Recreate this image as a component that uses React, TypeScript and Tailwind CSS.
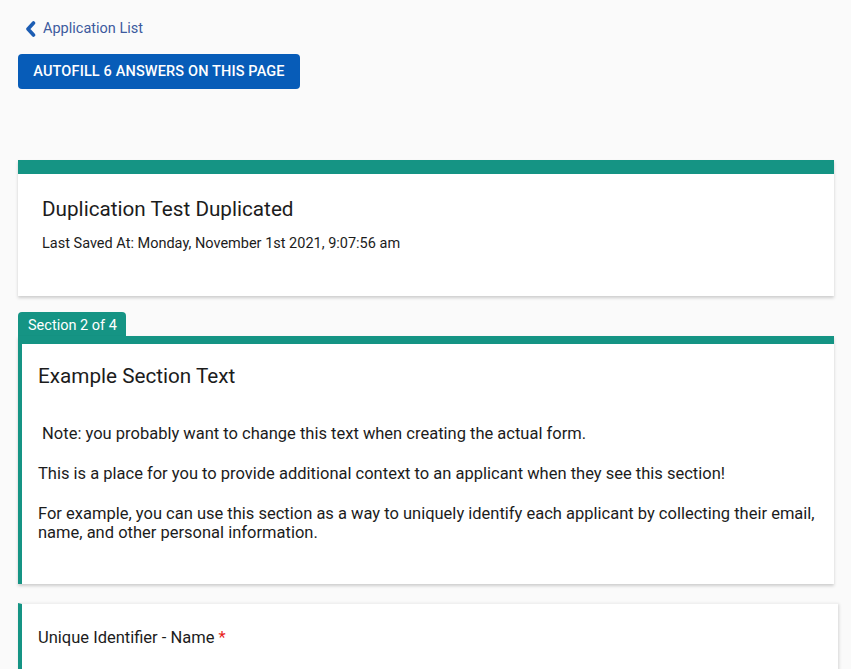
// Application form page: back link, autofill action, header card and section cards.

function SectionCard({ children }: { children: React.ReactNode }) {
  return (
    <div className="border-t-[8px] border-l-4 border-[#159484] bg-white shadow-[0_2px_3px_rgba(0,0,0,0.18)]">
      {children}
    </div>
  );
}

export default function App() {
  return (
    <div
      className="min-h-[669px] bg-[#fafafa] px-[18px] text-[#1c1c1c]"
      style={{ fontFamily: 'Roboto, "Liberation Sans", sans-serif' }}
    >
      {/* Back link */}
      <div className="flex h-[54px] items-center pt-[4px] pl-[7px]">
        <a href="#" className="flex items-center gap-[7px] text-[14.5px] text-[#3d5a9e]">
          <svg width="11" height="16" viewBox="0 0 11 16" aria-hidden="true">
            <path d="M8.5 2 L3 8 L8.5 14" fill="none" stroke="#1c5db3" strokeWidth="3.6" strokeLinecap="round" strokeLinejoin="round" />
          </svg>
          Application List
        </a>
      </div>

      <button
        type="button"
        className="h-[35px] w-[282px] rounded-[4px] bg-[#075cb8] text-[14.5px] font-medium tracking-[0.01em] text-white uppercase"
      >
        Autofill 6 answers on this page
      </button>

      {/* Header card */}
      <div className="mt-[71px] w-[816px] border-t-[14px] border-[#159484] bg-white shadow-[0_2px_3px_rgba(0,0,0,0.18)]">
        <div className="px-6 pt-[22px] pb-[43px]">
          <h1 className="text-[20.7px] leading-[26px]">Duplication Test Duplicated</h1>
          <p className="mt-[13px] text-[14.5px] leading-[18px]">
            Last Saved At: Monday, November 1st 2021, 9:07:56 am
          </p>
        </div>
      </div>

      {/* Section 2 */}
      <div className="mt-[16px] w-[816px]">
        <div className="flex h-[24px] w-[108px] items-center rounded-t-[4px] bg-[#159484] pt-[3px] pl-[10px] text-[14.5px] text-white">
          Section 2 of 4
        </div>
        <SectionCard>
          <div className="px-4 pt-[19px] pb-[42px]">
            <h2 className="text-[20.7px] leading-[26px]">Example Section Text</h2>
            <div className="mt-[35px] flex flex-col gap-[21px] text-[16.5px] leading-[19px]">
              <p>&nbsp;Note: you probably want to change this text when creating the actual form.</p>
              <p>This is a place for you to provide additional context to an applicant when they see this section!</p>
              <p>
                For example, you can use this section as a way to uniquely identify each applicant by collecting their
                email, name, and other personal information.
              </p>
            </div>
          </div>
        </SectionCard>
      </div>

      {/* Question card */}
      <div className="mt-[19px] h-[80px] w-[820px] border-t border-l-4 border-t-[#f0f0f0] border-l-[#159484] bg-white shadow-[1px_1px_3px_rgba(0,0,0,0.15)]">
        <div className="px-4 pt-[24px] text-[16.5px] leading-[19px]">
          Unique Identifier - Name <span className="text-[#e8231b]">*</span>
        </div>
      </div>
    </div>
  );
}
